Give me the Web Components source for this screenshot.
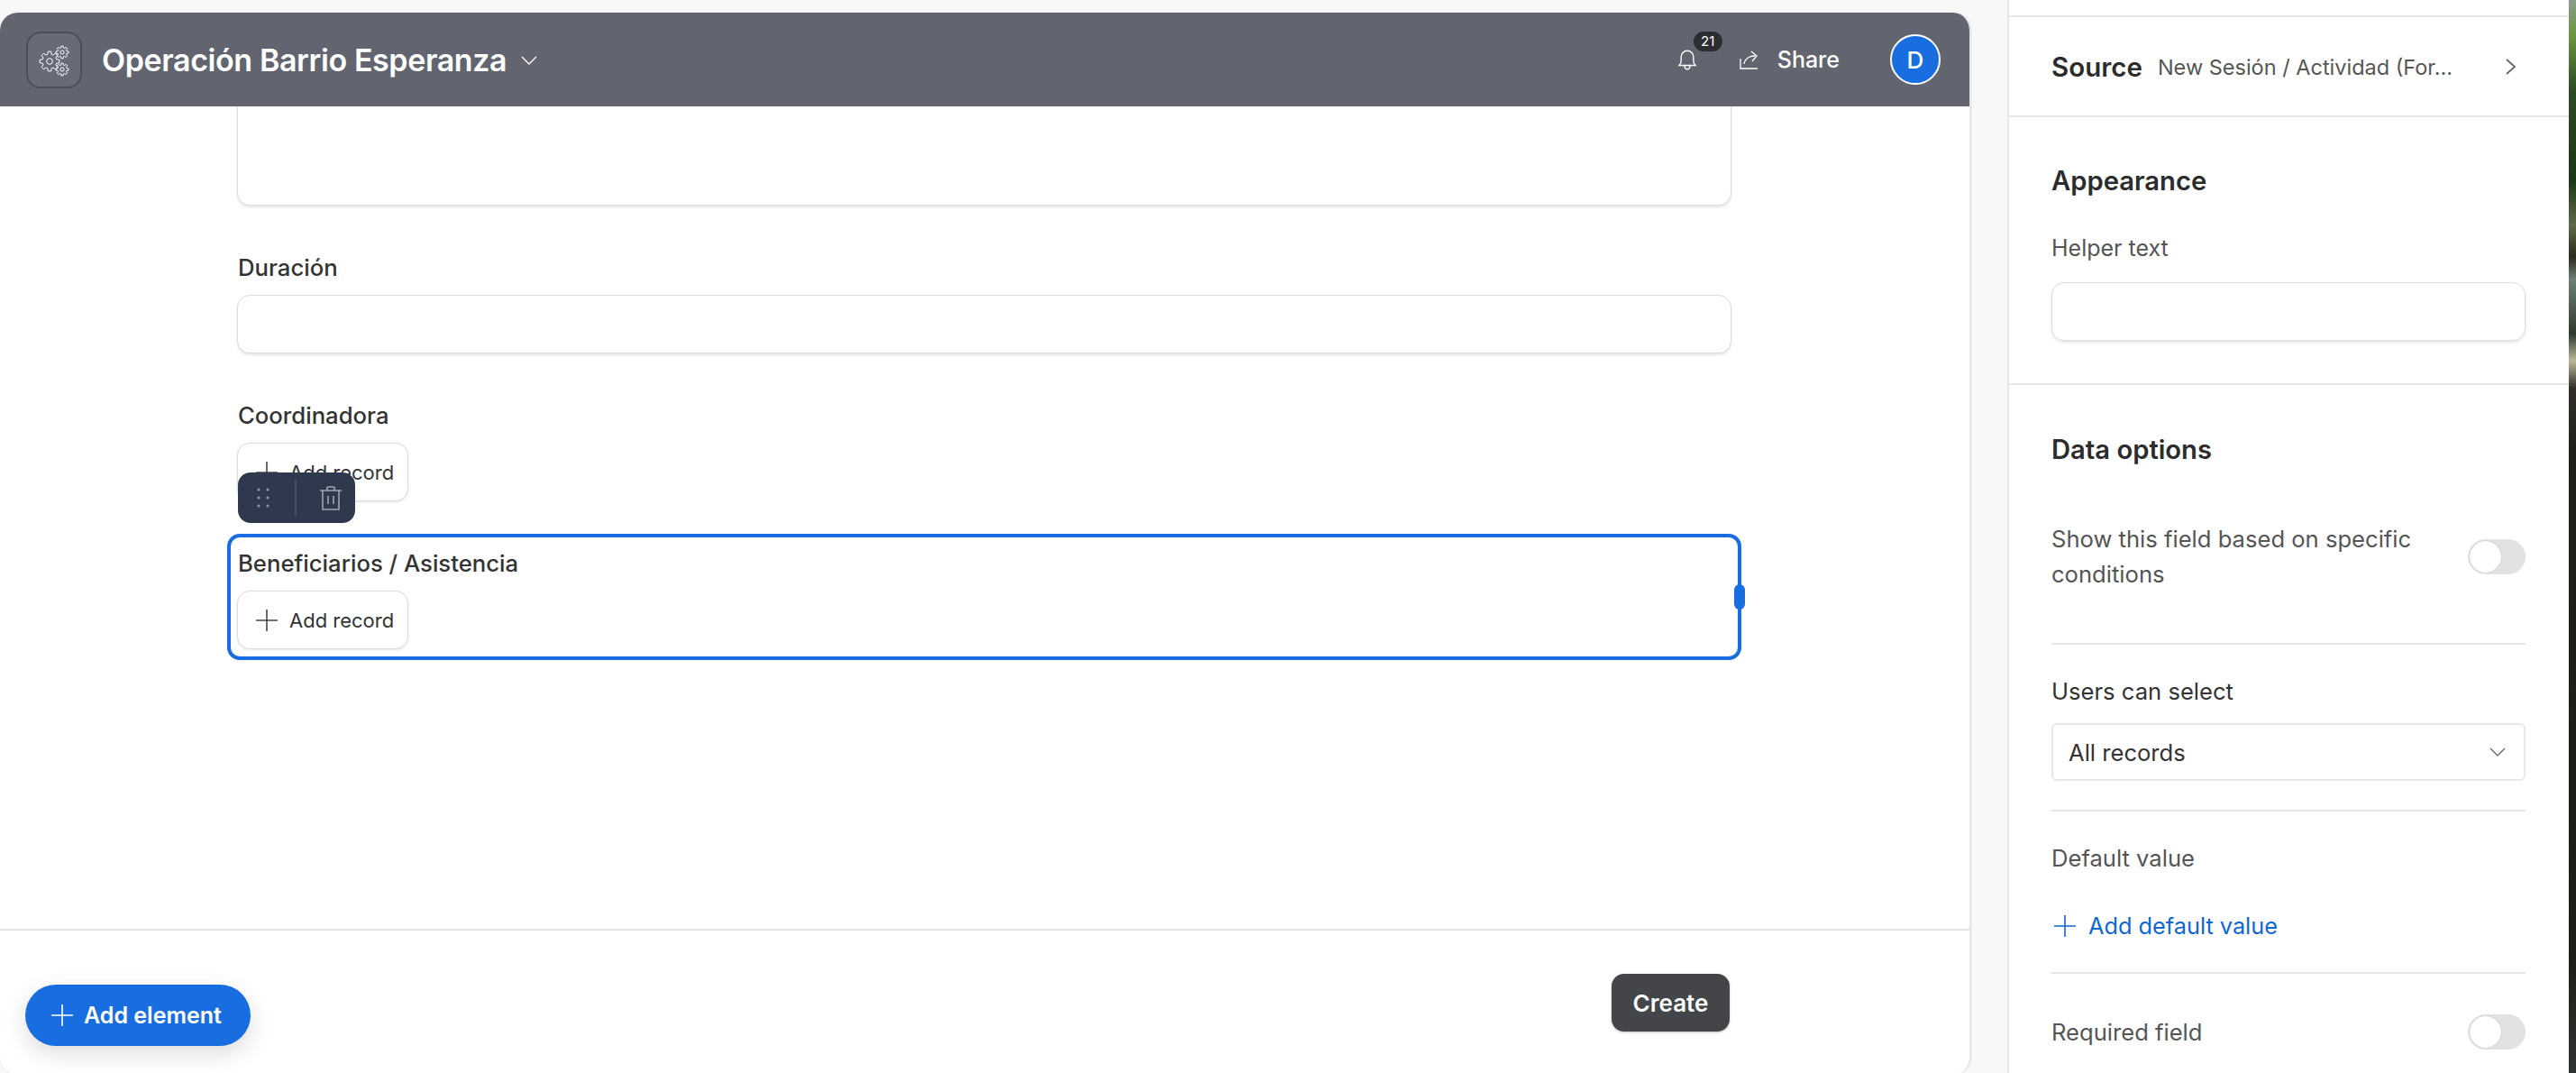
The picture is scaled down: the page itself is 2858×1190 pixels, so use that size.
<!DOCTYPE html>
<html>
<head>
<meta charset="utf-8">
<title>Form builder</title>
<style>
  html, body { margin: 0; height: 100%; overflow: hidden; background: #f8f8f8; }
  body { font-family: Inter, "Liberation Sans", sans-serif; color: #333; }
</style>
</head>
<body>
<builder-page>
  <form-canvas slot="main">
    <app-header title-text="Operación Barrio Esperanza"></app-header>
    <form-field slot="fields" label="" kind="textarea"></form-field>
    <form-field slot="fields" label="Duración" kind="input"></form-field>
    <form-field slot="fields" label="Coordinadora" kind="record" toolbar></form-field>
    <form-field slot="fields" label="Beneficiarios / Asistencia" kind="record" selected></form-field>
  </form-canvas>
  <side-panel slot="side"></side-panel>
</builder-page>

<script>
// shared bits of svg
const PLUS = (size, color) => `<svg width="${size}" height="${size}" viewBox="0 0 24 24" fill="none" stroke="${color}" stroke-width="1.6"><path d="M12 0v24M0 12h24"/></svg>`;
const CHEVRON = (w, h, color) => `<svg width="${w}" height="${h}" viewBox="0 0 18 10" fill="none" stroke="${color}" stroke-width="1.3" preserveAspectRatio="none"><path d="M1 1l8 8 8-8"/></svg>`;

function gear(cx, cy, r, teeth) {
  let pts = [];
  const step = Math.PI * 2 / teeth;
  for (let i = 0; i < teeth; i++) {
    const a = i * step;
    [[-.3, .72], [-.16, 1], [.16, 1], [.3, .72]].forEach(([o, k]) => {
      pts.push((cx + Math.cos(a + o * step * 1.2) * r * k).toFixed(2) + ' ' + (cy + Math.sin(a + o * step * 1.2) * r * k).toFixed(2));
    });
  }
  return `<path d="M${pts.join('L')}Z"/><circle cx="${cx}" cy="${cy}" r="${(r * .3).toFixed(1)}"/>`;
}

class BuilderPage extends HTMLElement {
  connectedCallback() {
    this.attachShadow({ mode: 'open' });
    this.shadowRoot.innerHTML = `
      <style>
        :host { display: flex; width: 2858px; height: 1190px; overflow: hidden; background: #f8f8f8; }
        .main { width: 2187px; flex: none; padding-top: 14px; box-sizing: border-box; margin-right: 40px; }
        .side { width: 623px; flex: none; }
        .wall {
          width: 8px; flex: none;
          background: linear-gradient(#8a9f8c 0, #6d9440 40px, #2d4a25 100px, #1e3518 200px, #5d6a4a 250px, #2b2a1e 285px, #6e8075 310px, #2f3a2c 370px, #bab79a 400px, #33302a 430px, #1f1e1a 500px, #1d1c18 1060px, #2f3330 1190px);
        }
      </style>
      <div class="main"><slot name="main"></slot></div>
      <div class="side"><slot name="side"></slot></div>
      <div class="wall"></div>
    `;
  }
}

class FormCanvas extends HTMLElement {
  connectedCallback() {
    this.attachShadow({ mode: 'open' });
    this.shadowRoot.innerHTML = `
      <style>
        :host {
          display: flex; flex-direction: column;
          height: 1178px; box-sizing: border-box;
          background: #fff; border-right: 2px solid #e6e6e6;
          border-radius: 20px; overflow: hidden;
          box-shadow: 0 0 2px rgba(0,0,0,.12);
        }
        .scroll { flex: 1; min-height: 0; overflow: hidden; padding: 0 264px 0 263px; }
        .fields { display: flex; flex-direction: column; gap: 52px; margin-top: -30px; }
        footer {
          flex: none; height: 162px; box-sizing: border-box;
          border-top: 2px solid #e2e2e2;
          display: flex; justify-content: space-between; align-items: flex-start;
        }
        .add {
          margin: 60px 0 0 28px; height: 68px; width: 250px; box-sizing: border-box;
          padding-left: 29px; gap: 12px;
          display: flex; align-items: center;
          background: #186ee0; color: #fff; border-radius: 34px;
          font-size: 25px; font-weight: 600;
          box-shadow: 0 8px 26px rgba(0,0,0,.14);
        }
        .create {
          margin: 48px 266px 0 0; width: 131px; height: 64px;
          display: flex; align-items: center; justify-content: center;
          background: #444549; color: #fff; border-radius: 14px;
          font-size: 26px; font-weight: 600;
          box-shadow: 0 1px 3px rgba(0,0,0,.25);
        }
      </style>
      <slot></slot>
      <div class="scroll"><div class="fields"><slot name="fields"></slot></div></div>
      <footer>
        <div class="add">${PLUS(24, '#fff')}<span>Add element</span></div>
        <div class="create">Create</div>
      </footer>
    `;
  }
}

class AppHeader extends HTMLElement {
  connectedCallback() {
    this.attachShadow({ mode: 'open' });
    this.shadowRoot.innerHTML = `
      <style>
        :host {
          display: flex; align-items: center; flex: none;
          height: 104px; padding: 0 32px 0 29px; box-sizing: border-box;
          background: #62656f; color: #fff;
        }
        .logo {
          width: 62px; height: 63px; box-sizing: border-box;
          border: 2px solid #4a4e5b; border-radius: 16px; background: #676b78;
          display: flex;
        }
        .title { margin-left: 22px; font-size: 34px; font-weight: 600; letter-spacing: -.4px; }
        .caret { margin-left: 16px; display: flex; margin-top: 1px; }
        .right { margin-left: auto; display: flex; align-items: center; }
        .bell { position: relative; display: flex; margin-right: 47px; }
        .badge {
          position: absolute; left: 18px; top: -19px;
          width: 32px; height: 22px; border-radius: 11px;
          background: #2b2d31; color: #fff;
          font-size: 15px; line-height: 22px; text-align: center;
        }
        .share { display: flex; align-items: center; gap: 18px; font-size: 25px; font-weight: 500; margin-right: 56px; }
        .avatar {
          width: 56px; height: 56px; box-sizing: border-box;
          border: 2px solid #fff; border-radius: 50%;
          background: #186ee0; color: #fff;
          display: flex; align-items: center; justify-content: center;
          font-size: 26px; font-weight: 500;
        }
      </style>
      <div class="logo">
        <svg width="58" height="59" viewBox="0 0 58 59" fill="none" stroke="#fff" stroke-width="1">
          ${gear(24, 31, 11, 8)}${gear(38, 21, 7, 8)}${gear(38, 40, 7, 8)}
        </svg>
      </div>
      <div class="title">${this.getAttribute('title-text')}</div>
      <div class="caret">${CHEVRON(18, 10, '#fff')}</div>
      <div class="right">
        <div class="bell">
          <svg width="22" height="24" viewBox="0 0 22 24" fill="none" stroke="#fff" stroke-width="1.4"><path d="M2 18.5c1.6-1.5 2.2-3.2 2.2-6V9a6.8 6.8 0 0 1 13.6 0v3.5c0 2.800.6 4.500 2.200 6zM8 19c0 5 6 5 6 0"/></svg>
          <div class="badge">21</div>
        </div>
        <div class="share">
          <svg width="24" height="21" viewBox="0 0 24 21" fill="none" stroke="#fff" stroke-width="1.3"><path d="M1 9v11h19M5 15c1-6 6-9 12-9M13 1l6 5-5 6"/></svg>
          <span>Share</span>
        </div>
        <div class="avatar">D</div>
      </div>
    `;
  }
}

class FormField extends HTMLElement {
  connectedCallback() {
    const kind = this.getAttribute('kind');
    const label = this.getAttribute('label');
    this.attachShadow({ mode: 'open' });
    let control = '';
    if (kind === 'textarea') control = '<div class="box tall"></div>';
    if (kind === 'input') control = '<div class="box"></div>';
    if (kind === 'record') control = `<div class="record">${PLUS(24, '#444')}<span>Add record</span></div>`;
    this.shadowRoot.innerHTML = `
      <style>
        :host { display: block; position: relative; }
        .label { height: 32px; line-height: 34px; margin-bottom: 15px; padding-left: 1px; font-size: 25.7px; font-weight: 500; color: #333; }
        .box {
          height: 65px; box-sizing: border-box; background: #fff;
          border: 1px solid #dcdcdc; border-radius: 14px;
          box-shadow: 0 2px 3px rgba(0,0,0,.1);
        }
        .tall { height: 140px; }
        .record {
          width: 190px; height: 65px; box-sizing: border-box;
          display: flex; align-items: center; gap: 13px; padding-left: 20px;
          background: #fff; border: 1px solid #dcdcdc; border-radius: 14px;
          box-shadow: 0 1px 3px rgba(0,0,0,.1);
          font-size: 22px; color: #333;
        }
        .frame {
          position: absolute; left: -11px; right: -11px; top: -16px; bottom: -12px;
          border: 4px solid #186ee0; border-radius: 14px; pointer-events: none;
        }
        .handle {
          position: absolute; right: -8px; top: 52px;
          width: 12px; height: 28px; border-radius: 6px; background: #186ee0;
        }
        .tools {
          position: absolute; left: 1px; top: 80px;
          width: 130px; height: 56px; display: flex; align-items: center;
          background: #2f394e; border-radius: 14px;
        }
        .grip { width: 65px; padding-right: 7px; display: flex; justify-content: center; border-right: 2px solid #454e62; height: 40px; align-items: center; box-sizing: border-box; }
        .bin { flex: 1; padding-left: 10px; display: flex; justify-content: center; }
      </style>
      ${label ? `<div class="label">${label}</div>` : ''}
      ${control}
      ${this.hasAttribute('selected') ? '<div class="frame"><div class="handle"></div></div>' : ''}
      ${this.hasAttribute('toolbar') ? `<div class="tools">
        <div class="grip"><svg width="14" height="22" viewBox="0 0 14 22" fill="#8f96a6"><circle cx="2" cy="2" r="1.600"/><circle cx="12" cy="2" r="1.600"/><circle cx="2" cy="11" r="1.600"/><circle cx="12" cy="11" r="1.600"/><circle cx="2" cy="20" r="1.600"/><circle cx="12" cy="20" r="1.600"/></svg></div>
        <div class="bin"><svg width="24" height="27" viewBox="0 0 24 27" fill="none" stroke="#a0a6b4" stroke-width="1.600"><path d="M0 5h24M8 5V2a1 1 0 0 1 1-1h6a1 1 0 0 1 1 1v3M3 5v21h18V5M9 11v9M15 11v9"/></svg></div>
      </div>` : ''}
    `;
  }
}

class ToggleSwitch extends HTMLElement {
  connectedCallback() {
    this.attachShadow({ mode: 'open' });
    this.shadowRoot.innerHTML = `
      <style>
        :host { display: block; flex: none; width: 64px; height: 39px; border-radius: 20px; background: #e2e2e2; padding: 2px; box-sizing: border-box; }
        i { display: block; width: 35px; height: 35px; border-radius: 50%; background: #fff; box-shadow: 0 0 1px rgba(0,0,0,.3); }
      </style>
      <i></i>
    `;
  }
}

class SidePanel extends HTMLElement {
  connectedCallback() {
    this.attachShadow({ mode: 'open' });
    this.shadowRoot.innerHTML = `
      <style>
        :host {
          display: block; height: 1190px; box-sizing: border-box;
          background: #fff; border-left: 2px solid #e6e6e6;
          font-size: 25.6px; color: #555;
        }
        section { border-bottom: 2px solid #e6e6e6; padding: 0 48px 0 47px; box-sizing: border-box; }
        .top { height: 19px; }
        .source { height: 111px; display: flex; align-items: center; padding-top: 1px; }
        .source b { font-size: 29.5px; font-weight: 600; color: #2c2c2c; margin-right: 17px; }
        .source span { flex: 1; white-space: nowrap; font-size: 23.5px; }
        .source svg { margin-right: 10px; }
        h3 { margin: 0; font-size: 29.2px; line-height: 34px; font-weight: 600; color: #2c2c2c; }
        .appearance { height: 297px; padding-top: 54px; }
        .lbl { line-height: 30px; }
        .appearance .lbl { margin-top: 42px; font-size: 25px; }
        .box {
          height: 65px; margin-top: 23px; box-sizing: border-box;
          border: 1px solid #dcdcdc; border-radius: 14px; box-shadow: 0 2px 3px rgba(0,0,0,.1);
        }
        .data { padding-top: 55px; border-bottom: 0; }
        .row { display: flex; align-items: center; justify-content: space-between; }
        .cond { margin-top: 62px; line-height: 39px; }
        .cond div { width: 470px; }
        hr { border: 0; border-top: 2px solid #e6e6e6; margin: 0; }
        .dark { color: #333; }
        .select {
          height: 64px; margin-top: 20px; box-sizing: border-box;
          display: flex; align-items: center; justify-content: space-between;
          padding: 0 20px 0 17px; color: #333;
          border: 2px solid #e8e8e8; border-radius: 6px;
        }
        .link { display: flex; align-items: center; gap: 14px; color: #0f67d0; padding-left: 3px; font-size: 25.3px; }
      </style>
      <section class="top"></section>
      <section class="source">
        <b>Source</b><span>New Sesión / Actividad (For...</span>
        <svg width="12" height="18" viewBox="0 0 12 18" fill="none" stroke="#666" stroke-width="1.800"><path d="M1 1l9 8-9 8"/></svg>
      </section>
      <section class="appearance">
        <h3>Appearance</h3>
        <div class="lbl">Helper text</div>
        <div class="box"></div>
      </section>
      <section class="data">
        <h3>Data options</h3>
        <div class="row cond"><div>Show this field based on specific conditions</div><toggle-switch></toggle-switch></div>
        <hr style="margin-top:57px">
        <div class="lbl dark" style="margin-top:37px">Users can select</div>
        <div class="select"><span>All records</span>${CHEVRON(18, 10, '#666')}</div>
        <hr style="margin-top:32px">
        <div class="lbl" style="margin-top:37px">Default value</div>
        <div class="link" style="margin-top:45px;line-height:30px">${PLUS(24, '#0f67d0')}<span>Add default value</span></div>
        <hr style="margin-top:36px">
        <div class="row" style="margin-top:45px"><div>Required field</div><toggle-switch></toggle-switch></div>
      </section>
    `;
  }
}

customElements.define('builder-page', BuilderPage);
customElements.define('form-canvas', FormCanvas);
customElements.define('app-header', AppHeader);
customElements.define('form-field', FormField);
customElements.define('toggle-switch', ToggleSwitch);
customElements.define('side-panel', SidePanel);
</script>
</body>
</html>
